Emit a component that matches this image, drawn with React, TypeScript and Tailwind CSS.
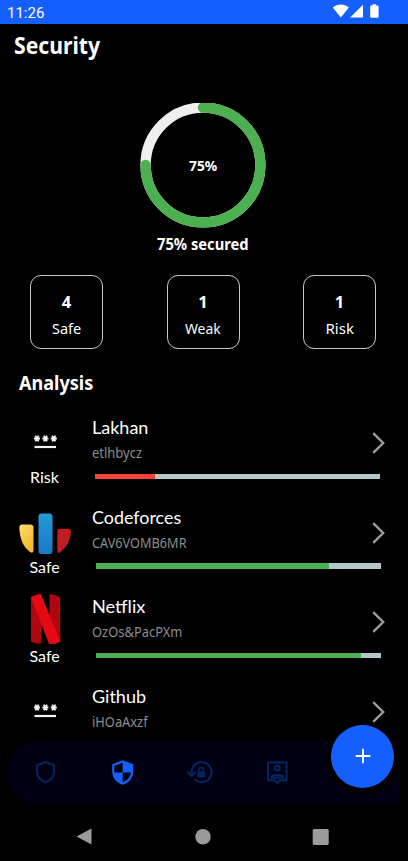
import { useLayoutEffect, useRef, useState } from "react";

type FitProps = { text: string; width: number; className?: string };

// Condenses a line of text to the given width.
function Fit({ text, width, className = "" }: FitProps) {
  const ref = useRef<HTMLSpanElement>(null);
  const [scale, setScale] = useState(1);
  useLayoutEffect(() => {
    if (ref.current) setScale(width / ref.current.offsetWidth);
  }, [text, width]);
  return (
    <span className="block" style={{ width }}>
      <span
        ref={ref}
        className={`inline-block origin-left whitespace-nowrap ${className}`}
        style={{ transform: `scaleX(${scale})` }}
      >
        {text}
      </span>
    </span>
  );
}

const NOTO = "font-['Noto_Sans',sans-serif]";
const LATO = "font-['Lato',sans-serif]";

function StatusBar() {
  return (
    <header className="flex h-6 shrink-0 items-start justify-between bg-[#145ffe] pr-[28px] pl-[7px] text-white">
      <Fit text="11:26" width={37} className="font-['Roboto',sans-serif] text-[15px] leading-[22px]" />
      <svg width="48" height="24" viewBox="332 0 48 24" fill="currentColor">
        <path d="M332.800 7.500C337 3.400 344.600 3.400 348.800 7.500L340.800 17.500Z" />
        <path d="M363 4.700V17.500H350.200Z" />
        <path d="M372.500 4.200h3.600v1.400h1.500q1 0 1 1v10.200q0 1-1 1h-6.400q-1 0-1-1V6.600q0-1 1-1h1.300z" />
      </svg>
    </header>
  );
}

function Ring() {
  return (
    <div className="ml-[140px] grid h-[126px] w-[126px] place-items-center">
      <svg className="col-start-1 row-start-1" width="126" height="126" viewBox="0 0 126 126" fill="none" strokeWidth="10.4">
        <circle cx="63" cy="62" r="57.400" stroke="#efefed" />
        <path d="M63 4.600A57.400 57.400 0 1 1 5.600 62" stroke="#4caf50" strokeLinecap="round" />
      </svg>
      <div className="col-start-1 row-start-1 pb-[3px]">
        <Fit text="75%" width={28.500} className={`${NOTO} text-[15px] leading-5 font-bold`} />
      </div>
    </div>
  );
}

const stats = [
  { count: "4", label: "Safe", width: 29 },
  { count: "1", label: "Weak", width: 36 },
  { count: "1", label: "Risk", width: 28 },
];

function Dots() {
  return (
    <svg width="52" height="42" viewBox="0 0 52 42" fill="none" stroke="#f5f5f5">
      {[18, 26.400, 34.800].map((x) => (
        <g key={x} transform={`translate(${x} 15.500)`} strokeWidth="1.800">
          <path d="M-3 0H3M-1.600-2.900L1.600 2.900M1.600-2.900L-1.600 2.900" />
        </g>
      ))}
      <path d="M15.500 24H37" strokeWidth="2.200" />
    </svg>
  );
}

function CodeforcesLogo() {
  return (
    <svg width="52" height="42" viewBox="0 0 52 42">
      <defs>
        <linearGradient id="cfYellow" x1="0" y1="0" x2="0.600" y2="1">
          <stop stopColor="#ffdc6c" />
          <stop offset="1" stopColor="#f5b92d" />
        </linearGradient>
        <linearGradient id="cfBlue" x1="0" y1="0" x2="0" y2="1">
          <stop stopColor="#259bd7" />
          <stop offset="1" stopColor="#1779c7" />
        </linearGradient>
      </defs>
      <path d="M3 11.500H11Q14.500 11.500 14.500 14.500V37Q14.500 41 11 39Q1 32 .300 15Q.300 11.500 3 11.500Z" fill="url(#cfYellow)" />
      <rect x="19.500" y="0.500" width="14" height="40.500" rx="3.200" fill="url(#cfBlue)" />
      <path d="M41 15.700H49Q52 16 52 19.500Q51 32 41 39.500Q38.300 41 38.300 37V19Q38.300 15.700 41 15.700Z" fill="#c31b25" />
    </svg>
  );
}

function NetflixLogo() {
  return (
    <svg width="52" height="50" viewBox="0 0 52 50">
      <path d="M12 3.500Q15.500 .500 22.500 0V49.500Q15.500 50 12 47.500Z" fill="#b00610" />
      <path d="M30.500 0Q37.500 .500 41.200 3.500V47.500Q37.500 50 30.500 50Z" fill="#b00610" />
      <path d="M22.500 22L32 50H22.500Z" fill="#000" />
      <path d="M12 3.500Q15.500 .500 22 0L41.200 47.500Q37.500 50 30 50Z" fill="#e50914" />
    </svg>
  );
}

const accounts = [
  { name: "Lakhan", nameW: 56, pass: "etlhbycz", passW: 50, status: "Risk", statusW: 29, logo: <Dots />, fill: 21, color: "bg-[#f44336]", bar: "ml-[95px]" },
  { name: "Codeforces", nameW: 89.500, pass: "CAV6VOMB6MR", passW: 94.500, status: "Safe", statusW: 30, logo: <CodeforcesLogo />, fill: 82, color: "bg-[#4caf50]", bar: "ml-24" },
  { name: "Netflix", nameW: 53.500, pass: "OzOs&PacPXm", passW: 90.500, status: "Safe", statusW: 30, logo: <NetflixLogo />, fill: 93.200, color: "bg-[#4caf50]", bar: "ml-24" },
  { name: "Github", nameW: 54, pass: "iHOaAxzf", passW: 56, status: "", statusW: 29, logo: <Dots />, fill: 0, color: "bg-[#f44336]", bar: "ml-24" },
];

function AccountRow({ a }: { a: (typeof accounts)[number] }) {
  return (
    <li className="grid h-[89.500px] shrink-0 grid-cols-1">
      <div className="col-start-1 row-start-1 flex pt-[8px]">
        <div className="ml-[19px] flex w-[52px] flex-col items-center">
          <div className="flex h-[50px] items-end justify-center">{a.logo}</div>
          {a.status && (
            <div className="pr-px">
              <Fit text={a.status} width={a.statusW} className={`${LATO} text-[16px] leading-[23px]`} />
            </div>
          )}
        </div>
        <div className="ml-[21px] flex-1">
          <Fit text={a.name} width={a.nameW} className={`${LATO} text-[18px] leading-[24px]`} />
          <Fit text={a.pass} width={a.passW} className={`${NOTO} text-[14px] leading-[22px] text-[#8d8d8d]`} />
        </div>
        <svg className="mt-[17px] mr-[22px]" width="14" height="22" viewBox="0 0 14 22" fill="none" stroke="#9c9c9c" strokeWidth="2.400">
          <path d="M1.200 1.200L11.200 11L1.200 20.800" />
        </svg>
      </div>
      <div className={`col-start-1 row-start-1 mt-[66.500px] h-[5.500px] w-[284.500px] bg-[#b4c5cb] ${a.bar}`}>
        <div className={`h-full ${a.color}`} style={{ width: `${a.fill}%` }} />
      </div>
    </li>
  );
}

function BottomNav() {
  return (
    <nav className="relative h-[63px] shrink-0 text-[#002764]">
      <svg className="block" width="408" height="63" viewBox="0 740.500 408 63">
        <path d="M38.500 740.500H328.300A38.500 38.500 0 0 0 400 770V803.500H38.500A31.500 31.500 0 0 1 38.500 740.500Z" fill="#000012" />
        <g fill="none" stroke="currentColor" strokeWidth="2">
          <path d="M45.500 761.500L54 764.700V771C54 776.500 50.300 780 45.500 781.700C40.700 780 37 776.500 37 771V764.700Z" />
          <path d="M191.500 775V771.500A10 10 0 1 1 194.500 778.800M187.500 771.200L191.500 775.300L195.700 771.200" />
          <path d="M198.800 771.500V769.500A2.400 2.400 0 0 1 203.600 769.500V771.500" strokeWidth="1.500" />
          <path d="M268 762H286.500V779.700H280L277.300 782.500L274.500 779.700H268Z" strokeLinejoin="round" />
          <circle cx="277.300" cy="767.500" r="2.500" />
          <path d="M271.500 777V776C272.500 773.500 282 773.500 283 776V777Z" />
        </g>
        <rect x="197.500" y="771" width="7.500" height="6" rx="1" fill="currentColor" />
        <path d="M122.700 759.700L133.200 763.700V771C133.200 777.500 128.700 782.500 122.700 784.200C116.700 782.500 112.200 777.500 112.200 771V763.700Z" fill="#145ffe" />
        <path d="M122.700 762.200V772H114.400C114.200 770 114.300 767 114.300 765.300ZM122.700 772H131C130.500 776.500 127 780.500 122.700 781.800Z" fill="#000012" />
      </svg>
      <button aria-label="Add" className="absolute top-[-16px] left-[331px] grid h-[63px] w-[63px] place-items-center rounded-full bg-[#145ffe]">
        <svg width="16" height="16" viewBox="0 0 16 16" stroke="white" strokeWidth="1.900">
          <path d="M8 .700V15.300M.700 8H15.300" />
        </svg>
      </button>
    </nav>
  );
}

export default function App() {
  return (
    <div className="flex h-[861px] w-[408px] flex-col overflow-hidden bg-black text-white">
      <StatusBar />
      <h1 className="h-[79px] shrink-0 pt-1 pl-[14px]">
        <Fit text="Security" width={86.500} className={`${NOTO} text-[24px] leading-[34px] font-bold`} />
      </h1>
      <Ring />
      <div className="flex h-[46px] shrink-0 justify-center pt-[3px] pr-[3px]">
        <Fit text="75% secured" width={92} className={`${NOTO} text-[16px] leading-6 font-bold`} />
      </div>
      <div className="flex shrink-0 justify-between pr-[32px] pl-[30px]">
        {stats.map((s) => (
          <div key={s.label} className="flex h-[74px] w-[73px] flex-col items-center rounded-[11px] border border-[#c8c8c8] pt-[13px]">
            <span className={`${NOTO} text-[16.500px] leading-[26px] font-bold`}>{s.count}</span>
            <Fit text={s.label} width={s.width} className={`${NOTO} text-[15px] leading-[26px]`} />
          </div>
        ))}
      </div>
      <h2 className="h-[58px] shrink-0 pt-[20px] pl-[19px]">
        <Fit text="Analysis" width={74} className={`${NOTO} text-[20px] leading-7 font-bold`} />
      </h2>
      <ul className="flex h-[333.500px] shrink-0 flex-col overflow-hidden">
        {accounts.map((a) => (
          <AccountRow key={a.name} a={a} />
        ))}
      </ul>
      <BottomNav />
      <footer className="flex-1">
        <svg width="408" height="57" viewBox="0 804 408 57" fill="#9b9b9b">
          <path d="M91.500 828.500V844.500L76.500 836.500Z" />
          <circle cx="203" cy="836.700" r="7.700" />
          <rect x="312.700" y="829" width="16" height="16" rx="1.500" />
        </svg>
      </footer>
    </div>
  );
}
